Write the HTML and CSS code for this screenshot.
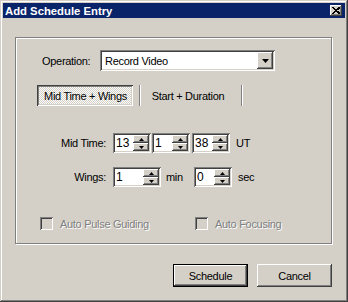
FILE: index.html
```html
<!DOCTYPE html>
<html lang="en">
  <head>
    <meta charset="UTF-8" />
    <meta name="viewport" content="width=device-width, initial-scale=1.0" />
    <title>Add Schedule Entry</title>
    <link rel="stylesheet" href="styles.css">
  </head>
  <body>
    <div class="window">
      <div class="titlebar">
        <span class="title">Add Schedule Entry</span>
        <span class="close raised">
          <svg width="8" height="7" viewBox="0 0 8 7"><path d="M0.5 0.5 L7 6.5 M1.5 0.5 L8 6.5 M7 0.5 L0.5 6.5 M8 0.5 L1.5 6.5" stroke="#000" stroke-width="1" fill="none" shape-rendering="crispEdges"/></svg>
        </span>
      </div>

      <div class="content">
        <div class="group">
          <div class="row op-row">
            <span class="op-label">Operation:</span>
            <div class="combo sunken">
              <span class="combo-text">Record Video</span>
              <span class="combo-btn raised">
                <svg width="7" height="4" viewBox="0 0 7 4"><polygon points="0,0 7,0 3.5,4" fill="#000"/></svg>
              </span>
            </div>
          </div>

          <div class="row tab-row">
            <span class="tab pressed">Mid Time + Wings</span>
            <span class="sep"></span>
            <span class="tab">Start + Duration</span>
            <span class="sep"></span>
          </div>

          <div class="row time-row">
            <span class="field-label">Mid Time:</span>
            <div class="spin sunken">
              <span class="spin-val">13</span>
              <span class="spin-btns">
                <span class="spin-up raised"><svg width="5" height="3" viewBox="0 0 5 3"><polygon points="2.5,0 5,3 0,3" fill="#000"/></svg></span>
                <span class="spin-down raised"><svg width="5" height="3" viewBox="0 0 5 3"><polygon points="0,0 5,0 2.5,3" fill="#000"/></svg></span>
              </span>
            </div>
            <div class="spin sunken gap1">
              <span class="spin-val">1</span>
              <span class="spin-btns">
                <span class="spin-up raised"><svg width="5" height="3" viewBox="0 0 5 3"><polygon points="2.5,0 5,3 0,3" fill="#000"/></svg></span>
                <span class="spin-down raised"><svg width="5" height="3" viewBox="0 0 5 3"><polygon points="0,0 5,0 2.5,3" fill="#000"/></svg></span>
              </span>
            </div>
            <div class="spin sunken gap2">
              <span class="spin-val">38</span>
              <span class="spin-btns">
                <span class="spin-up raised"><svg width="5" height="3" viewBox="0 0 5 3"><polygon points="2.5,0 5,3 0,3" fill="#000"/></svg></span>
                <span class="spin-down raised"><svg width="5" height="3" viewBox="0 0 5 3"><polygon points="0,0 5,0 2.5,3" fill="#000"/></svg></span>
              </span>
            </div>
            <span class="unit">UT</span>
          </div>

          <div class="row wings-row">
            <span class="field-label">Wings:</span>
            <div class="spin sunken wide">
              <span class="spin-val">1</span>
              <span class="spin-btns">
                <span class="spin-up raised"><svg width="5" height="3" viewBox="0 0 5 3"><polygon points="2.5,0 5,3 0,3" fill="#000"/></svg></span>
                <span class="spin-down raised"><svg width="5" height="3" viewBox="0 0 5 3"><polygon points="0,0 5,0 2.5,3" fill="#000"/></svg></span>
              </span>
            </div>
            <span class="unit min">min</span>
            <div class="spin sunken">
              <span class="spin-val">0</span>
              <span class="spin-btns">
                <span class="spin-up raised"><svg width="5" height="3" viewBox="0 0 5 3"><polygon points="2.5,0 5,3 0,3" fill="#000"/></svg></span>
                <span class="spin-down raised"><svg width="5" height="3" viewBox="0 0 5 3"><polygon points="0,0 5,0 2.5,3" fill="#000"/></svg></span>
              </span>
            </div>
            <span class="unit">sec</span>
          </div>

          <div class="row check-row">
            <span class="check sunken"></span>
            <span class="check-label first">Auto Pulse Guiding</span>
            <span class="check sunken"></span>
            <span class="check-label">Auto Focusing</span>
          </div>
        </div>

        <div class="buttons">
          <button class="btn default">Schedule</button>
          <button class="btn">Cancel</button>
        </div>
      </div>
    </div>
  </body>
</html>
```

FILE: styles.css
```css
body {
  margin: 0;
  background-color: #d4d0c8;
  font-family: "Liberation Sans", Arial, sans-serif;
  font-size: 11px;
  letter-spacing: -0.3px;
  color: #000;
}
.window {
  width: 348px;
  height: 302px;
  box-sizing: border-box;
  padding: 3px;
  background-color: #d4d0c8;
  box-shadow: inset -1px -1px #404040, inset 1px 1px #d4d0c8, inset -2px -2px #808080, inset 2px 2px #fff;
}
.raised {
  background-color: #d4d0c8;
  box-shadow: inset -1px -1px #404040, inset 1px 1px #fff, inset -2px -2px #808080, inset 2px 2px #d4d0c8;
}
.sunken {
  background-color: #fff;
  box-shadow: inset 1px 1px #808080, inset -1px -1px #fff, inset 2px 2px #404040, inset -2px -2px #d4d0c8;
}

/* title bar */
.titlebar {
  height: 15px;
  background-color: #0a246a;
  display: flex;
  align-items: center;
  justify-content: space-between;
  padding: 0 3px 0 2px;
}
.title {
  color: #fff;
  font-weight: bold;
  font-size: 11.3px;
  letter-spacing: 0;
}
.close {
  width: 12px;
  height: 11px;
  display: flex;
  align-items: center;
  justify-content: center;
}

.content {
  padding: 19px 13px 0 12px;
}

/* group box */
.group {
  border: 1px solid #808080;
  box-shadow: inset 1px 1px #fff, 1px 1px #fff;
  padding: 12px 0 13px 0;
}
.row {
  display: flex;
  align-items: center;
  white-space: nowrap;
}

.op-row {
  height: 21px;
  padding-left: 26px;
}
.op-label {
  width: 58px;
}
.combo {
  width: 175px;
  height: 21px;
  box-sizing: border-box;
  padding: 2px;
  display: flex;
  align-items: center;
}
.combo-text {
  flex: 1;
  padding-left: 3px;
}
.combo-btn {
  width: 16px;
  height: 17px;
  display: flex;
  align-items: center;
  justify-content: center;
}

/* tab-like toggle buttons */
.tab-row {
  margin-top: 14px;
  height: 21px;
  padding-left: 21px;
}
.tab {
  height: 21px;
  display: flex;
  align-items: center;
  justify-content: center;
}
.tab.pressed {
  width: 96px;
  padding-top: 1px;
  padding-left: 1px;
  box-sizing: border-box;
  background: repeating-conic-gradient(#fff 0 25%, #d4d0c8 0 50%) 0 0 / 2px 2px;
  box-shadow: inset 1px 1px #404040, inset -1px -1px #fff, inset 2px 2px #808080, inset -2px -2px #d4d0c8;
}
.tab + .sep + .tab {
  width: 94px;
}
.sep {
  width: 1px;
  height: 21px;
  background-color: #808080;
  border-right: 1px solid #fff;
  margin-left: 5px;
}
.tab + .sep {
  margin-left: 6px;
}

/* spinners */
.time-row {
  margin-top: 27px;
  height: 20px;
}
.wings-row {
  margin-top: 14px;
  height: 20px;
}
.field-label {
  width: 90px;
  text-align: right;
  margin-right: 7px;
}
.spin {
  width: 38px;
  height: 20px;
  box-sizing: border-box;
  padding: 2px;
  display: flex;
  align-items: center;
}
.spin.wide {
  width: 48px;
}
.spin.gap1 {
  margin-left: 1px;
}
.spin.gap2 {
  margin-left: 2px;
}
.spin-val {
  flex: 1;
  padding-left: 1px;
  font-size: 12px;
  letter-spacing: 0;
}
.spin-btns {
  width: 16px;
  height: 16px;
  display: flex;
  flex-direction: column;
}
.spin-up, .spin-down {
  height: 8px;
  display: flex;
  align-items: center;
  justify-content: center;
}
.unit {
  margin-left: 6px;
}
.unit.min {
  margin-left: 5px;
  width: 28px;
}

/* disabled checkboxes */
.check-row {
  margin-top: 30px;
  height: 13px;
  padding-left: 24px;
}
.check {
  width: 13px;
  height: 13px;
  background-color: #d4d0c8;
}
.check-label {
  margin-left: 7px;
  color: #808080;
  text-shadow: 1px 1px #fff;
}
.check-label.first {
  width: 135px;
}

/* bottom buttons */
.buttons {
  display: flex;
  justify-content: flex-end;
  margin-top: 20px;
  gap: 9px;
}
.btn {
  width: 75px;
  height: 23px;
  border: none;
  font-family: inherit;
  font-size: 11px;
  letter-spacing: -0.3px;
  color: #000;
  padding: 0;
  background-color: #d4d0c8;
  box-shadow: inset -1px -1px #404040, inset 1px 1px #fff, inset -2px -2px #808080, inset 2px 2px #d4d0c8;
}
.btn.default {
  box-shadow: inset 0 0 0 1px #000, inset -2px -2px #404040, inset 2px 2px #fff, inset -3px -3px #808080;
}
```
